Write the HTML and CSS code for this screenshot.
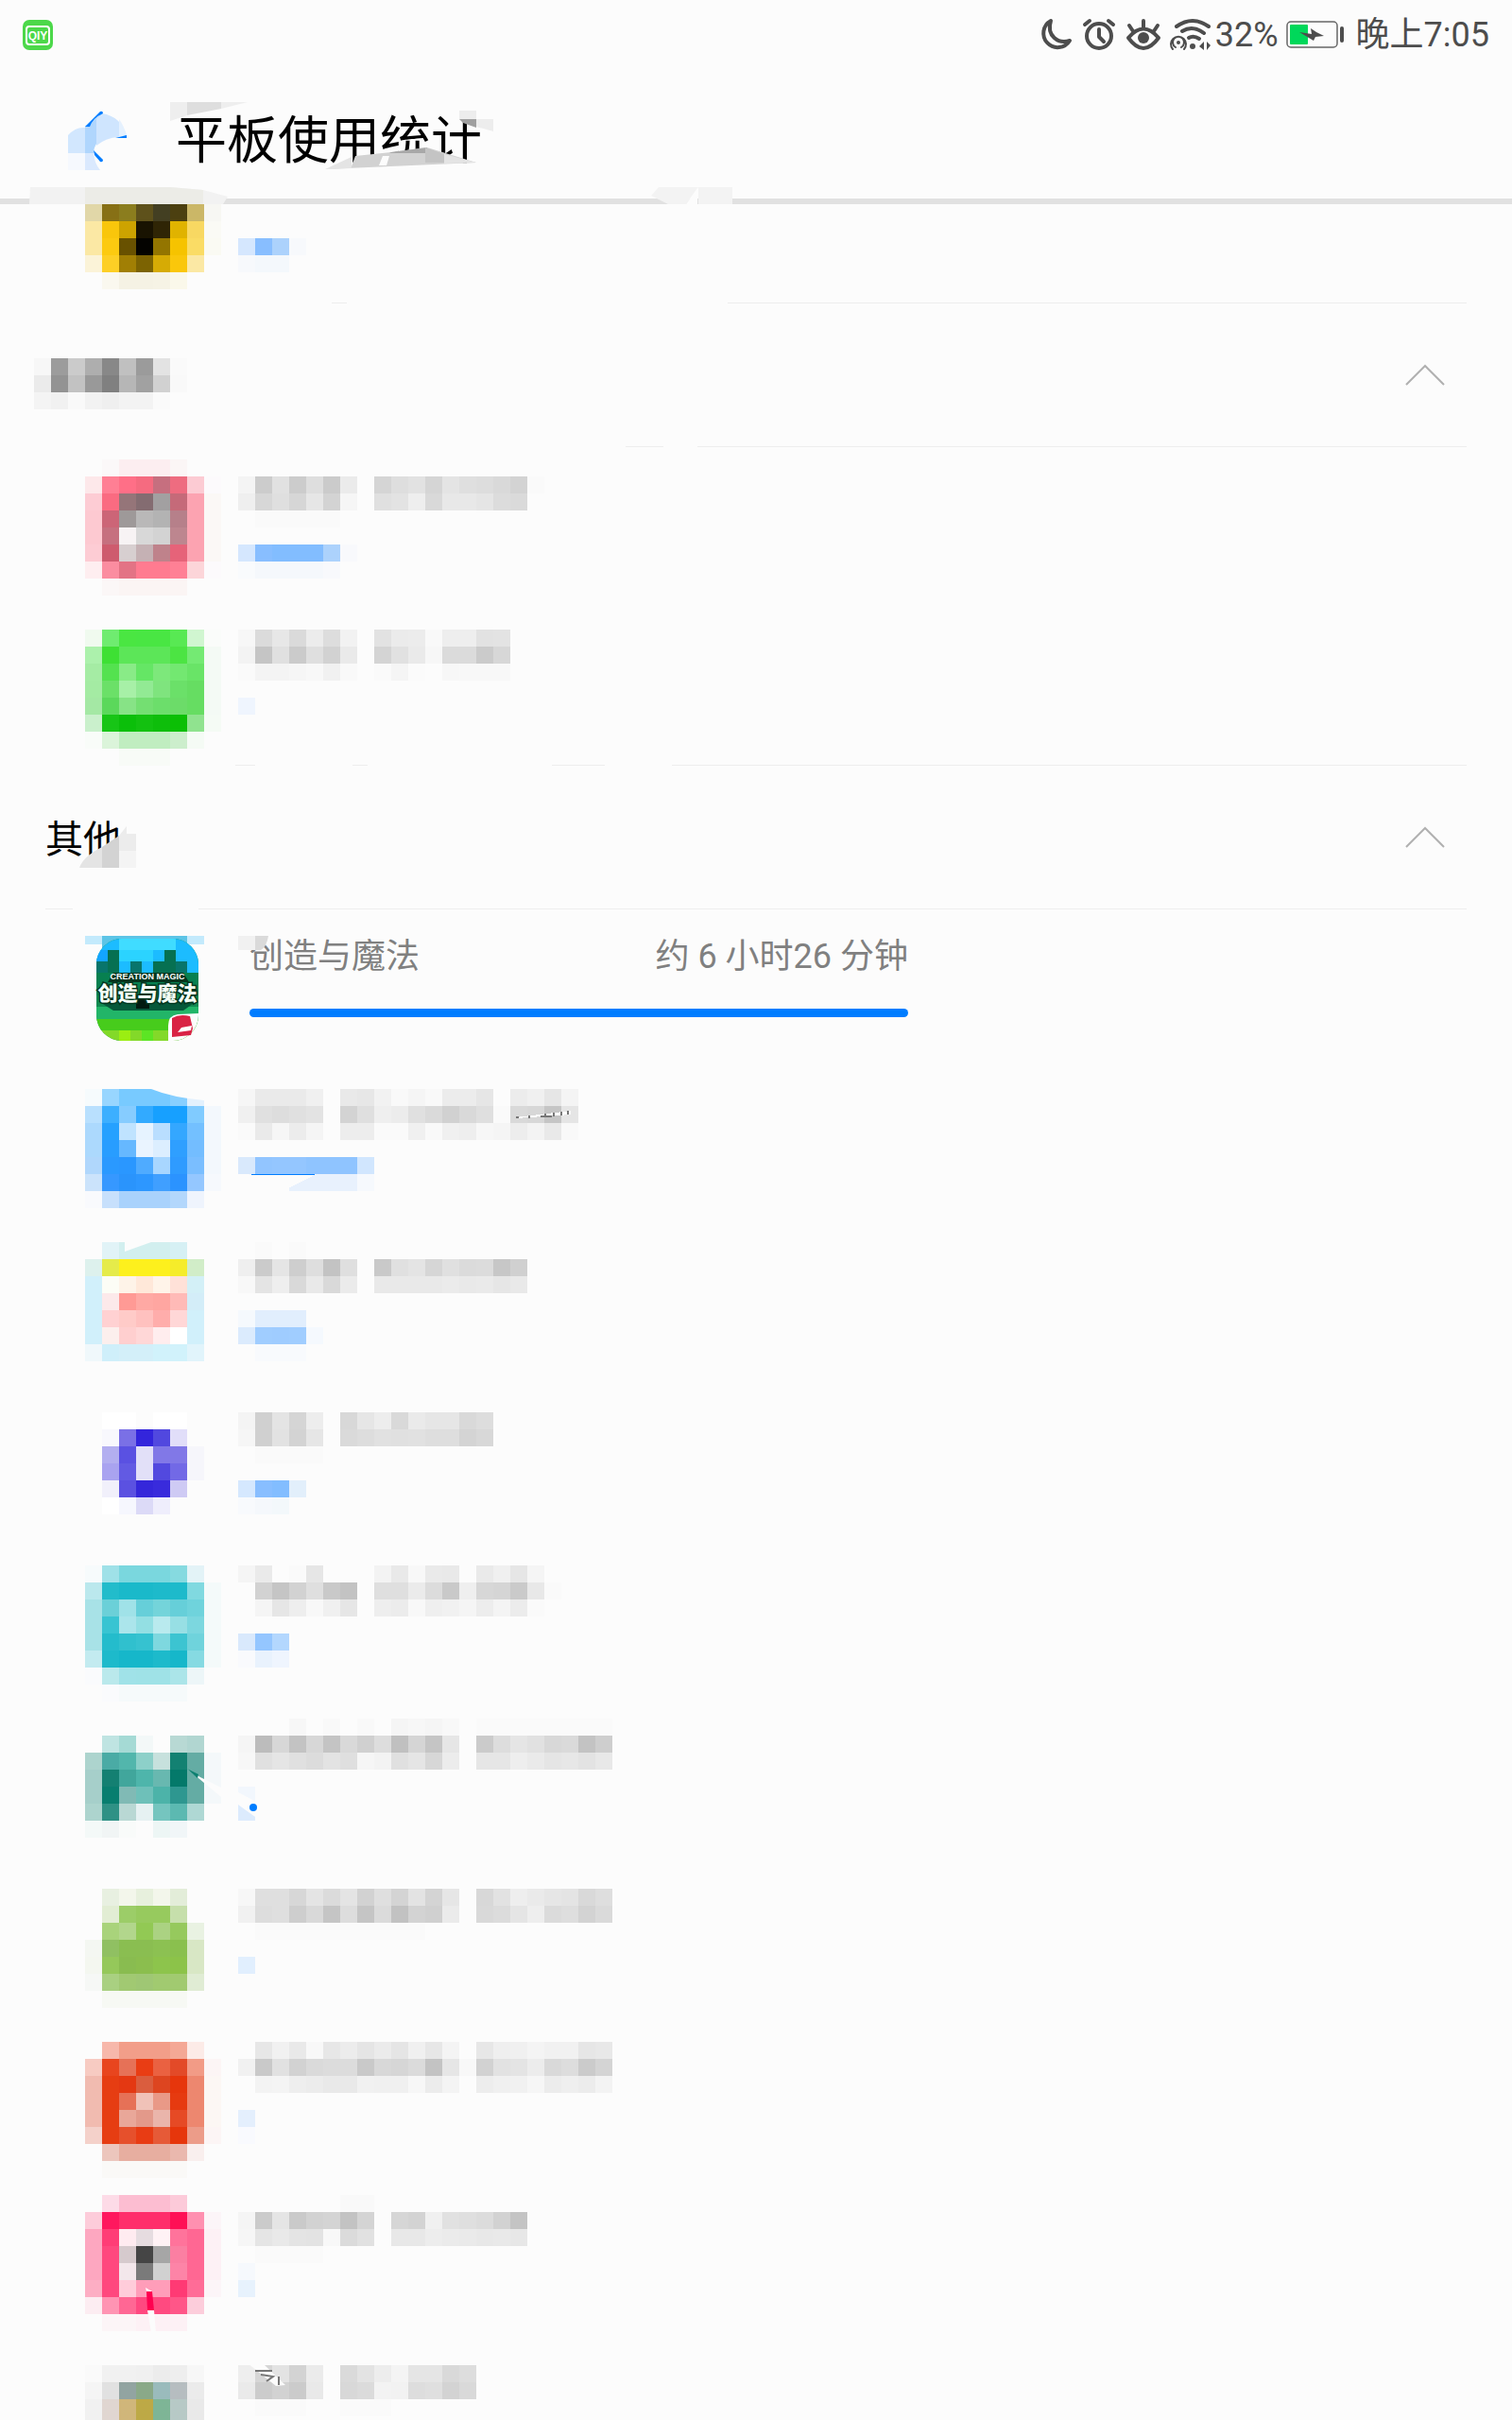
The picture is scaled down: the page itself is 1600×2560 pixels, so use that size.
FILE: index.html
```html
<!DOCTYPE html>
<html lang="zh-CN">
<head>
    <meta charset="UTF-8">
    <meta name="viewport" content="width=device-width, initial-scale=1.0">
    <title>平板使用统计</title>
    <link rel="stylesheet" href="styles.css">
</head>
<body>

    <header class="top">
        <div class="status-bar">
            <svg class="notice" viewBox="0 0 32 32" width="32" height="32">
                <rect width="32" height="32" rx="7" fill="#4cd84a"/>
                <rect x="4" y="7" width="24" height="19" rx="3" fill="none" stroke="#fff" stroke-width="2"/>
                <text x="16" y="21" text-anchor="middle" class="notice-text">QIY</text>
            </svg>
            <div class="status-icons">
                <svg viewBox="0 0 34 34" width="34" height="34" class="line-icon">
                    <path d="M12 2 A15 15 0 1 0 32 23 C20 27 7 18 12 2 Z"/>
                </svg>
                <svg viewBox="0 0 34 34" width="34" height="34" class="line-icon">
                    <circle cx="17" cy="18" r="13"/>
                    <path d="M17 11v8l5 5M2 6l5-4M32 6l-5-4"/>
                </svg>
                <svg viewBox="0 0 36 34" width="36" height="34" class="line-icon">
                    <path d="M2 20 Q18 1 34 20 Q18 42 2 20 Z M18 2v7 M3 7l4 6 M33 7l-4 6"/>
                    <circle cx="18" cy="20" r="6" class="solid"/>
                </svg>
                <svg viewBox="0 0 44 34" width="44" height="34" class="line-icon">
                    <path d="M7 8 Q24 -4 41 8"/>
                    <path d="M13 13 Q24 6 36 15"/>
                    <path d="M20 20 Q25 17 31 21"/>
                    <circle cx="24" cy="29" r="3" class="solid"/>
                    <circle cx="9" cy="25" r="2" class="solid"/>
                    <path class="thin" d="M6 30a6 6 0 1 1 6 0M3 32a8 8 0 1 1 12 0"/>
                    <path class="solid" d="M31 29l5-5v9zM43 28l-4-4v9z"/>
                </svg>
                <span class="percent">32%</span>
                <svg viewBox="0 0 62 30" width="62" height="30">
                    <rect x="1" y="1" width="53" height="27" rx="4" fill="none" stroke="#666" stroke-width="1.5"/>
                    <rect x="4" y="4" width="19" height="21" rx="1" fill="#00d85a"/>
                    <path d="M14 12L27 14L26 8L32 12L40 16L31 17L29 21Z" fill="#4d4d4d"/>
                    <rect x="57" y="6" width="4" height="17" rx="2" fill="#4d4d4d"/>
                </svg>
                <span class="clock">晚上7:05</span>
            </div>
        </div>

        <div class="title-bar">
            <button class="back" type="button" aria-label="返回">
                <svg viewBox="0 0 72 60" width="72" height="60">
                    <path d="M0 26Q8 17 18 18V45H0Z" fill="#d2e7fe"/>
                    <path d="M18 17L36 3V30Q27 35 27 45H18Z" fill="#b0d6fd"/>
                    <path d="M36 3Q56 6 62 27L52 28Q40 29 30 37V9Z" fill="#cfe5fe"/>
                    <path d="M54 9Q59 16 62 26L54 28Z" fill="#e5f1fe"/>
                    <path d="M50 29L62 26V29Z" fill="#007dff"/>
                    <path d="M0 45H18V63H0Z" fill="#f6f9fe"/>
                    <path d="M18 45H27Q28 56 34 63H18Z" fill="#dae9fe"/>
                    <path d="M18 17L34 1Q37 0 37 3Q26 8 23 17Z" fill="#007dff"/>
                    <path d="M27 42L37 52Q37 55 34 54L28 47Z" fill="#007dff"/>
                </svg>
            </button>
            <h1>平板使用统计</h1>
        </div>

        <!-- wiped patches over the title -->
        <svg class="smudge" viewBox="0 0 800 216" width="800" height="216">
            <path d="M180 108H198V122L180 128Z" fill="#eee"/>
            <path d="M198 108H234V115L198 122Z" fill="#dedede"/>
            <path d="M234 108H262L234 115Z" fill="#eee"/>
            <path d="M486 117H504V126H486Z" fill="#ededed"/>
            <path d="M486 126H504V135L490 130Z" fill="#a0a0a0"/>
            <path d="M504 126H522V139L504 134Z" fill="#ededed"/>
            <path d="M372 176L376 165L414 161L452 156L504 172L344 179Z" fill="#d2d2d2"/>
            <path d="M414 161L452 156V162H412Z" fill="#a8a8a8"/>
            <path d="M450 156L470 163V172H450Z" fill="#c4c4c4"/>
            <path d="M470 163L504 172L470 173Z" fill="#e4e4e4"/>
            <path d="M344 179L372 166V178Z" fill="#e4e4e4"/>
            <path d="M405 165H412L409 175H401Z" fill="#fcfcfc"/>
            <path d="M32 198H180L215 201L241 208L236 216H31Z" fill="#f2f2f2"/>
            <path d="M90 198H180L215 201V216H90Z" fill="#ecece7"/>
            <path d="M697 198H739L726 216H707L689 207ZM739 198H775V216H739Z" fill="#f3f3f3"/>
            <path d="M726 216L738 199V216Z" fill="#fcfcfc"/>
        </svg>
    </header>

    <main>
        <ul class="apps cut" id="apps-top"></ul>

        <section class="recent">
            <button class="group" type="button" aria-expanded="true" aria-label="分组">
                <span id="group-name"></span>
                <svg class="chevron" viewBox="0 0 44 24" width="44" height="24"><path d="M2 22L22 2L42 22"/></svg>
            </button>
            <ul class="apps" id="apps-recent"></ul>
        </section>

        <section class="other">
            <button class="group named" type="button" aria-expanded="true">
                <span class="group-text">其他</span>
                <svg class="chevron" viewBox="0 0 44 24" width="44" height="24"><path d="M2 22L22 2L42 22"/></svg>
                <svg class="wipe" viewBox="0 0 72 72" width="72" height="72">
                    <path d="M2 36Q6 24 26 14V36Z" fill="#e4e4e4"/>
                    <path d="M26 14L44 2V36H26Z" fill="#d3d3d3"/>
                    <path d="M44 2L52 -8V0H62V18H44Z" fill="#ececec"/>
                    <path d="M44 18H62V36H44Z" fill="#f4f4f4"/>
                </svg>
            </button>
            <ul class="apps" id="apps-other">
                <li class="app full">
                    <svg class="game" viewBox="0 0 108 108" width="108" height="108">
                        <defs>
                            <clipPath id="game-shape"><rect width="108" height="108" rx="27"/></clipPath>
                        </defs>
                        <path d="M-12 -3H6V6H-12ZM96 -3H114V6H96Z" fill="#c3eafc"/>
                        <path d="M6 -3H96V10H6Z" fill="#5cc4e6"/>
                        <g clip-path="url(#game-shape)">
                            <rect width="108" height="108" fill="#139552"/>
                            <rect width="108" height="36" fill="#1cbcff"/>
                            <path d="M24 0H84V12H24Z" fill="#40dcff"/>
                            <path d="M24 12H60V24H24Z" fill="#2bd3ff"/>
                            <path d="M0 12H12V24H0Z" fill="#13a5ff"/>
                            <path d="M0 24H12V36H0ZM36 24H48V36H36ZM84 24H96V36H84Z" fill="#08756b"/>
                            <path d="M12 12H24V36H12ZM72 12H84V24H72ZM60 24H84V36H60Z" fill="#067052"/>
                            <path d="M0 36H108V60H0Z" fill="#078050"/>
                            <path d="M0 60H108V74H0Z" fill="#128a51"/>
                            <path d="M0 72H108V85H0Z" fill="#22b568"/>
                            <path d="M0 85H108V97H0Z" fill="#47cc1c"/>
                            <path d="M0 97H108V108H0Z" fill="#83d929"/>
                            <path d="M24 97H36V108H24Z" fill="#9bee12"/>
                            <path d="M48 97H60V108H48Z" fill="#5ce524"/>
                            <path d="M2 66H106L92 76H18Z" fill="#06583a"/>
                            <path d="M12 46L18 36H92L98 46Z" fill="#04361f"/>
                            <path d="M42 60H56V74H42Z" fill="#021a10"/>
                            <path d="M76 108V92Q76 81 86 80L108 79V108Z" fill="#fcfcfc"/>
                        </g>
                        <text x="54" y="43" class="game-en" text-anchor="middle">CREATION MAGIC</text>
                        <text x="54" y="65" class="game-cn" text-anchor="middle">创造与魔法</text>
                        <path d="M80 84Q88 79 99 82L102 95L100 102L80 104Z" fill="#d92344"/>
                        <path d="M86 99L90 94L101 92L100 97Z" fill="#fff"/>
                    </svg>
                    <div class="usage">
                        <div class="usage-text">
                            <span>创造与魔法</span>
                            <span>约 6 小时26 分钟</span>
                        </div>
                        <div class="bar"></div>
                        <svg class="wipe" viewBox="0 0 36 18" width="36" height="18">
                            <path d="M0 0H18V15H0Z" fill="#f1f1f1"/>
                            <path d="M18 0H32Q30 12 24 15H18Z" fill="#dadada"/>
                        </svg>
                    </div>
                </li>
            </ul>
        </section>
    </main>

    <script src="script.js"></script>

</body>
</html>
```
FILE: styles.css
```css
* {
    box-sizing: border-box;
}

body {
    margin: 0;
    height: 100vh;
    overflow: hidden;
    display: flex;
    flex-direction: column;
    background-color: #fcfcfc;
    color: #000;
    font-family: Roboto, "Noto Sans CJK SC", sans-serif;
}

svg {
    display: block;
    flex: none;
    overflow: visible;
}

button {
    border: none;
    padding: 0;
    background: none;
    color: inherit;
    font-family: inherit;
    cursor: pointer;
}

/* Status bar + title */
.top {
    position: relative;
    flex: none;
    border-bottom: 6px solid #e1e1e1;
}

.status-bar {
    display: flex;
    justify-content: space-between;
    align-items: center;
    height: 74px;
    padding: 0 24px;
}

.notice-text {
    font-family: "Liberation Sans", sans-serif;
    font-size: 12px;
    font-weight: bold;
    fill: #fff;
}

.status-icons {
    display: flex;
    align-items: center;
    color: #4d4d4d;
    font-size: 36px;
    line-height: 48px;
}

.line-icon {
    margin-right: 12px;
    fill: none;
    stroke: #4d4d4d;
    stroke-width: 4;
    stroke-linecap: round;
    stroke-linejoin: round;
}

.line-icon:nth-of-type(3) {
    margin-right: 10px;
}

.line-icon:nth-of-type(4) {
    margin-right: 4px;
}

.line-icon .solid {
    fill: #4d4d4d;
    stroke: none;
}

.line-icon .thin {
    stroke-width: 2;
}

.percent {
    margin-right: 8px;
}

.clock {
    margin-left: 12px;
}

.title-bar {
    display: flex;
    align-items: center;
    height: 136px;
    padding: 10px 72px 0;
}

.back {
    margin-right: 42px;
}

h1 {
    margin: 0;
    padding-top: 6px;
    font-size: 54px;
    font-weight: 400;
    line-height: 72px;
}

.smudge {
    position: absolute;
    top: 0;
    left: 0;
    pointer-events: none;
}

/* Groups */
main {
    flex: 1;
    min-height: 0;
    overflow: hidden;
}

.group {
    position: relative;
    display: flex;
    justify-content: space-between;
    align-items: center;
    width: 100%;
    height: 152px;
    padding: 0 70px 0 36px;
    font-size: 40px;
    line-height: 60px;
}

.named {
    padding-left: 48px;
}

.group-text {
    padding-top: 6px;
}

.chevron {
    fill: none;
    stroke: #b0b0b0;
    stroke-width: 2;
}

/* Separator lines, worn away on the left side */
.cut,
.recent .group,
.recent .apps,
.other .group {
    background-repeat: no-repeat;
    background-position: left bottom;
    background-size: calc(100% - 48px) 1px;
}

.cut {
    background-image: linear-gradient(to right, transparent 351px, #eee 351px, #eee 367px, transparent 367px, transparent 770px, #eee 770px);
}

.recent .group {
    background-image: linear-gradient(to right, transparent 662px, #eee 662px, #eee 702px, transparent 702px, transparent 738px, #eee 738px);
}

.recent .apps {
    padding-bottom: 1px;
    background-image: linear-gradient(to right, transparent 249px, #eee 249px, #eee 270px, transparent 270px, transparent 373px, #eee 373px, #eee 389px, transparent 389px, transparent 584px, #eee 584px, #eee 640px, transparent 640px, transparent 711px, #eee 711px);
}

.other .group {
    background-image: linear-gradient(to right, transparent 48px, #eee 48px, #eee 77px, transparent 77px, transparent 210px, #eee 210px);
}

.named .wipe {
    position: absolute;
    left: 82px;
    top: 72px;
}

/* App rows */
.apps {
    margin: 0;
    padding: 0;
    list-style: none;
}

.cut {
    height: 105px;
}

.app {
    display: flex;
    align-items: flex-start;
    gap: 18px;
    height: 168px;
    padding-left: 90px;
}

.cut .app {
    height: 104px;
}

.snap-low {
    padding-top: 22px;
}

.snap-mid {
    padding-top: 16px;
}

.snap-high {
    padding-top: 10px;
}

.recent .snap-mid {
    padding-top: 13px;
}

.recent .snap-high {
    padding-top: 7px;
}

.full {
    gap: 54px;
    padding: 31px 0 0 102px;
}

.game-en {
    font-family: "Liberation Sans", sans-serif;
    font-size: 9px;
    font-weight: bold;
    fill: #fff;
}

.game-cn {
    font-size: 21px;
    font-weight: 900;
    fill: #f4fff6;
    stroke: #04361f;
    stroke-width: 3;
    paint-order: stroke;
}

.usage {
    position: relative;
    width: 47%;
    max-width: 697px;
}

.usage-text {
    display: flex;
    justify-content: space-between;
    margin-top: -5px;
    color: #808080;
    font-size: 36px;
    line-height: 48px;
}

.bar {
    height: 9px;
    margin-top: 31px;
    border-radius: 5px;
    background-color: #007dff;
}

.usage .wipe {
    position: absolute;
    left: -12px;
    top: -3px;
}
```
FILE: script.js
```js
const CELL = 18;

// Two digits = grey level, six = colour, "." = empty, "a*3" repeats the cell
function mosaic(rows, extra) {
    let rects = '';
    let cols = 0;
    rows.forEach((row, y) => {
        let x = 0;
        row.split(' ').filter(Boolean).forEach(token => {
            const [color, times] = token.split('*');
            const count = Number(times || 1);
            if (color !== '.') {
                const fill = color.length === 2 ? color.repeat(3) : color;
                rects += `<rect x="${x * CELL}" y="${y * CELL}" width="${count * CELL}" height="${CELL}" fill="#${fill}"/>`;
            }
            x += count;
        });
        cols = Math.max(cols, x);
    });
    const w = cols * CELL;
    const h = rows.length * CELL;
    return `<svg viewBox="0 0 ${w} ${h}" width="${w}" height="${h}" shape-rendering="crispEdges">${rects}${extra || ''}</svg>`;
}

function addApps(id, apps) {
    document.getElementById(id).insertAdjacentHTML('beforeend', apps.map(app =>
        `<li class="app ${app.snap}">${mosaic(app.icon, app.iconExtra)}${mosaic(app.label, app.labelExtra)}</li>`
    ).join(''));
}

document.getElementById('group-name').innerHTML = mosaic([
    '.*9',
    'f7 9c cb ae 88 c0 9b e3 fa',
    'eb 93 c2 99 80 b6 a1 d1 f9',
    'f4 f1 f9 f2 ef f3 f3 fa'
]);

addApps('apps-top', [{
    snap: '',
    icon: [
        'e1d7a8 877015 8b7d1e 5e511b 433f22 4c4010 cbb767 f7f7f3',
        'fbe8a4 f9c60b cda300 191301 2f2505 e0b300 f8d862 fafaf5',
        'fbe8a4 fcca10 685100 040300 937500 f6c300 fadc65 fafaf3',
        'fbf3d8 fdcf25 a17f04 7c6302 d6ab05 fac70b fbe8a4 .',
        '. faf8ef f5f2e4*2 f6f3e5 faf8ea'
    ],
    label: ['.', '.', 'd5e7fe 88beff acd2fc f7f9fc', 'f7f9fc f4f8fc*2']
}]);

addApps('apps-recent', [
    {
        snap: 'snap-mid',
        icon: [
            '. fbf8f9 fceef0*3 fbf6f6 . .',
            'fde8ea ff7f94 ff6f87 f56b80 c66f7f ee6c80 fccbd3 fcfafc',
            'fdccd4 fa6b81 957579 846c71 a2a0a1 c56a79 fca3b1 fbf8f6',
            'fdc9d1 cc6577 9e9999 b9b8b8 b3b3b3 b6808a fca3b1 fbf8f6',
            'fdc9d1 c6707f f7f3f4 d8d8d8 d3d3d3 bd868f fca3b1 fbf8f6',
            'fdccd4 ce5b6e d7cfd0 c5b1b4 bf828b e66379 fca3b1 fbf8f6',
            'feeef0 fb8da0 e37385 ff7b90*2 ff8095 fcd5d9 fcfafc',
            '. fbf7f7 fbf5f4*4'
        ],
        label: [
            '.',
            'f4 cc e1 cc de cb eb . d5 de e2 d5 e4 df dd d9 d3 fa',
            'ef d7 df d6 e6 d3 f6 . e0 e3 ee d9 e8 e8 e5 dc da',
            '. fa*5',
            '.',
            'd5e7fe 88beff 82bdff*3 acd2fc f8f9fc',
            'f9fbfd f5f8fc*4 f8f9fc'
        ]
    },
    {
        snap: 'snap-high',
        icon: [
            '.*8',
            'f0faef 6fec70 4ae642 49e643*2 58e953 d0f6d0 fafcfa',
            'acf1ac 3ee034 5ce658*2 5ce658 4ce443 74ea73 f4faf5',
            'a5eca4 54e24f 89eb87 65e665 7de87b 73e871 69e467 f4faf5',
            'a4eba3 6be068 a7f0a7 92ea94 7fe47e 6be069 66dd62 f4faf5',
            'a4e8a4 5bd85b 87e386 74df72 6cde6b 6cdc69 66dd62 f4faf5',
            'caf0cc 17c516 0bbf0a 13c110 0ebe0b 0bbf05 90e38f f5fbf5',
            'f9fcf9 dbf4da c0edc0*3 cceecc f5fbf5',
            '. . f8fbf7*3'
        ],
        label: [
            '.',
            'f7 db e7 da ec dd f2 . e2 eb ec f9 ee ee e2 e3',
            'f3 c5 e0 cb df d2 ea . d4 e1 ea f7 db db cb d7',
            'fa f4 f4 f6 f8 f1 f9 . fa f5 fb . f7 f8 f8 f8',
            '.',
            'eff5fe'
        ]
    }
]);

addApps('apps-other', [
    {
        snap: 'snap-low',
        icon: [
            'f6fbfd 98d6ff 78caff*3 87cfff e3f1fd .',
            'b9e0fe 3cafff 86ccff 32aaff 17a0ff*2 80cbff f3f8fd',
            'acd9fd 25a1ff bfe3ff e6f3ff b9deff 34a7ff 73c0ff f3f8fd',
            'acd9fd 289dff 66b8ff eaf4ff dceeff 2f9fff 73bdff f3f8fd',
            'b0d7fc 2a99ff 2a97ff 4fabff a8d6ff 2f9bff 7abeff f3f8fd',
            'cbe3fb 3698ff 2a94fc 2d97ff 409fff 2b93ff 94c7ff f6f9fd',
            'f9fafd c7e0fc a9d2fc*3 b3d7fc eff4fd'
        ],
        iconExtra: '<path d="M70 0Q92 9 126 12V0Z" fill="#fcfcfc" shape-rendering="auto"/>',
        label: [
            'f6 ea*3 f0 . e9 e7 f2 f9 f5 f9 ec ec e6 . ec f0 e6 f4',
            'f0 e0 dd e0 e3 . d3 df ef ec e0 da d1 d9 df fa d9 d7 c5 e5',
            'fa ea f6 ec f5 . ed ed fa fa f0 f9 f0 ee f7 f5 ed f3 e9 f9',
            '.',
            'd9e9fc 92c5ff 94c6ff*2 8fc4ff*3 d1e6fe',
            '. . . e8f1fd*4 f6f9fd'
        ],
        labelExtra: '<path d="M15 91H81L47 108H30Z" fill="#fcfcfc"/><rect x="14" y="90" width="67" height="1" fill="#007dff"/>' +
            '<path d="M294 30L352 23V27L294 31Z" fill="#fcfcfc"/><path d="M294 30h3M308 28v3M320 29h12M325 26v3M334 25v4M342 24v4M349 23v4" stroke="#777" stroke-width="2"/>'
    },
    {
        snap: 'snap-mid',
        icon: [
            '. e1f3f7 d2efef*3 d6f0f4 . .',
            'ddf1ed e5eb4a fdf01d*3 f5ec2a d1edc8',
            'd1f0fb fcfdf6 fef3e8 ffe8d9 fff4e9 ffe1d8 d3f0f7',
            'd1f0fb fce9ea ff9a95 ffa9a4 ffa6a1 ffbab7 d3edf8',
            'd1f0fb ffd1d2 ffcbc8 ffc1bf ffadab ffd7d7 d1f0fb',
            'd1f0fb fcefed ffcfcf ffd7d7 ffedee ffffff d1f0fb',
            'f0f8fb cfeffa d3eff9*2 d1f2fb*2 e1f4fb'
        ],
        iconExtra: '<path d="M42 0H70L42 10Z" fill="#fcfcfc" shape-rendering="auto"/>',
        label: [
            '. fa . fa',
            'ef cb e5 ce de c3 df . c9 e0 e4 d6 e0 db dc c7 d0',
            'f8 e4 ee d9 e9 d9 eb . e9 e9 e9 e9 eb e9 ea e6 e9',
            '.',
            'f5f9fd e1eefd*3',
            'dbebfd a0cdff 9fccff a0cdff f5f9fe',
            '. f8fafd*3'
        ]
    },
    {
        snap: 'snap-high',
        icon: [
            '.*8',
            '. ff ff . ff ff',
            '. f8f8fd 7a70e6 3325dc 5148df e1def9',
            '. b3aff0 5a51e2 e2e0f8 8178e7*2 f6f6fb',
            '. a9a3f0 625ae3 e2e0f8 5249df 7269e6 f6f6fb',
            '. f1f0fb 5b51e1 3527da 392bdc cecaf4',
            '. ff f6f7fe dcdaf7 efeefc'
        ],
        label: [
            '.',
            'f4 d0 e4 d5 ed . d8 e6 ed d9 ea e6 e6 d9 dd',
            'f6 d0 e2 d3 e6 . da dd e1 e0 e1 de de d4 d8',
            '. fa*4',
            '.',
            'd5e8fe 88beff 82bdff e2effb',
            'f8fafd f5f8fc f3f8fb'
        ]
    },
    {
        snap: 'snap-low',
        icon: [
            'f7fbfc 9fe1e8 7ad7de*3 86dae0 e3f3f7 .',
            'bbe8ed 22bccb 1ab9ca*2 1dbacb*2 80d9e0 f4fafa',
            'a8e2e7 6bd0d8 a0e2e8 66cfd9 74d4da 66cfd9 6fd3dc f4fafa',
            'a8e2e7 38c4d2 abe5eb 93dfe3 b9eaee 97dfe4 7cd7df f4fafa',
            'a8e2e7 24bccc 30c0ce 36c2d0 7ed8df 3cc4d1 6fd3dc f4fafa',
            'c3ebf0 1dbacb 16b7ca*2 1dbacb 16b7ca 86dae2 f4fafa',
            'fafbfd bae9ec a0e2e8 9fe2e7*2 abe5e9 edf6f8',
            '. fafbfd f6fafb*4'
        ],
        label: [
            'f5 ea . fa e6 . . . f3 e9 f8 ea e9 . ea f0 e6 f5',
            '. d2 c5 d2 df c9 c3 . df df eb dc c9 ef d7 d5 ca e8 fa',
            '. f5 e6 ee f8 f0 e6 . ee ec f8 ef f1 f5 ed f4 ec fa',
            '.',
            'd9e9fc 94c6ff b3d7fe',
            'f9fafd e9f2fd eff5fe'
        ]
    },
    {
        snap: 'snap-mid',
        icon: [
            '.*8',
            '. bfe4e2 a5dad5 f3f8f8 . b8d9d4 b1d6d1',
            'add4ce 4aaba5 52b6ac 8dd0c9 c7e1dd 138172 64aca4 f4f8fa',
            'a6cfca 148072 41a69c 4eb5ab 68b8b0 04796a 64aca4 f4f8fa',
            'a6cfca 087e6f 80bab5 6ec0b9 4cb3a9 2e9790 64aca4 f4f8fa',
            'add4ce 2f9185 b9d8d4 e6f1f2 75c5bf 5cb9b1 afd8d4',
            'f4f9f8 f1f5f5 f9fbfa . edf6f5 f1f6f8'
        ],
        iconExtra: '<path d="M108 53L122 62L144 73V83Z" fill="#fcfcfc" shape-rendering="auto"/><path d="M108 53L120 59L119 63Z" fill="#0b7f70" shape-rendering="auto"/>',
        label: [
            '. . . f7 . f9 . f9 . f5 f7 f5 f8 . fa*8',
            'f5 bc d7 c3 d7 c4 d9 d0 dd c0 d5 c5 e6 . cb dd e5 e1 d8 da c3 ce',
            'f7 e0 e5 e0 dc e3 df f6 f3 e0 e5 d7 ec . e6 e6 ee ea e5 e7 e3 e8',
            '.',
            'f2f7fd',
            'dcebfd'
        ],
        labelExtra: '<path d="M0 78L34 96L32 114L0 91Z" fill="#fcfcfc" shape-rendering="auto"/><circle cx="16" cy="94" r="4" fill="#007dff" shape-rendering="auto"/>'
    },
    {
        snap: 'snap-high',
        icon: [
            '.*8',
            '. e8f0e1 f3f6eb e7f0dd f3f6eb e3edd9',
            '. e2edd4 9ccd68 97ca5e*2 c6dfab',
            '. a9d37b b2d68c 92c954 abd282 96c95d e9f2e2',
            'f4f7f2 90c062 8abe51*2 8cc152 8ac04e d8e7c5',
            'f4f7f0 95c85a 89bc50 8bbe4e 8dc44c 8cc349 d8e7c5',
            'f6f8f6 a9d081 a1c972 9fc774 a1ca70*2 e0ecd4',
            '. f7f9f4*5'
        ],
        label: [
            '.',
            'f7 df df d7 e4 db e4 d2 df d4 e3 d4 e6 . d8 e2 ee ea e6 e4 d9 de',
            'f1 dd df ce d9 c5 dd c5 db c2 d3 d0 eb . d9 dc e5 ee db de d3 da',
            '. fa*10',
            '.',
            'e1effe'
        ]
    },
    {
        snap: 'snap-low',
        icon: [
            '. f7b8ab f29e89*3 f4a895 fcebe7 .',
            'f7cbc2 e8451e e67157 e93d14 ea6141 e34a28 f29b86 fcf5f5',
            'f1bbb0 e63d12 e43812 da5d3e dd4520 e6360c ed876f fcf7f4',
            'f1bbb0 e63d12 e67157 f0c2b8 e99987 e63a10 ed876f fcf7f4',
            'f1bbb0 e63d12 e9a799 e3998a eab5ab e64a25 ed876f fcf7f4',
            'f4d1ca e63d12 e6502c e83c14 e65a37 e6360c ec9c89 fcf5f5',
            '. ecc6bd e7aea0*3 eab8ae f9efee',
            '. faf9f7*5'
        ],
        label: [
            '. e7 f1 e9 f8 e7 ec e5 eb e5 f0 e7 f4 . e7 ef f0 f4 f1 f1 e6 e8',
            'f1 c9 e1 d2 da dc dc c9 d8 d6 db c3 e6 f8 d2 e2 e4 ec d9 dd cb d4',
            '. f3 f4 ee ec e9 e9 f1 f0 f0 f7 ec f4 . ed f0 f1 f6 ec ef ec f3',
            '.',
            'e4effd',
            'f9fafe'
        ]
    },
    {
        snap: 'snap-mid',
        icon: [
            '. fddbe7 fcbdd1*3 fccad9 . .',
            'fdccda ff175e ff2e6b*3 ff1055 ff90b0 fcf5f8',
            'fda7c0 ff3d76 ffebf0 e6dce0 fff2f5 ff739b ff6793 fdf1f5',
            'fda7c0 ff487e d6cacd 454545 a6a6a6 fb7fa2 ff6793 fdf1f5',
            'fda7c0 ff487e f3e7eb 7a7a7a d1d1d1 fd84a7 ff6793 fdf1f5',
            'fdaec4 ff487e ffccda ff9db9*2 ff3a74 ff6c97 fcf5f8',
            'fcedf2 ff94b3 ff6794 ff4880 ff4a80 ff5688 fccddb',
            '. fcf5f7*2 fdf1f5*3'
        ],
        iconExtra: '<g shape-rendering="auto"><path d="M64 98L71 102H65Z" fill="#fff"/><path d="M65 102H71L73 122H66Z" fill="#ff0050"/><path d="M66 122H73L75 146H70Z" fill="#fcfcfc"/></g>',
        label: [
            '. . . . . . f9 f9',
            'f5 cb e5 ca d2 d4 c3 d4 . d6 d3 f0 e1 df dc d2 c4',
            'f6 e5 e9 e4 e3 f8 db e1 . e8 e8 ed eb ea e8 e9 e7',
            '. fa*4',
            'f6f9fd',
            'e7f2fd'
        ]
    },
    {
        snap: 'snap-high',
        icon: [
            '.*8',
            'fa f1 f1 f0 ec ee f7',
            'f5 e1 92a4a1 8aa988 9abbbc b6bdc0 eb',
            'f1 e0d6d1 d0b67a bda946 7eb596 b7c9c6 e9',
            'f1 e0d6d1 d0b67a bda946 7eb596 b7c9c6 e9'
        ],
        label: [
            '.',
            'ee d6 e3 d3 eb . da e3 ed f4 e5 e5 d9 dd',
            'ea cc d2 cb e9 . d8 db f3 f2 dd df d3 d9',
            '. fa*3 . . fa*3'
        ],
        labelExtra: '<g shape-rendering="auto"><path d="M10 16L28 18L50 39L40 40Z" fill="#fcfcfc"/><path d="M18 24H36M24 28L37 30L30 35M43 30V39" fill="none" stroke="#777" stroke-width="2"/></g>'
    }
]);
```
